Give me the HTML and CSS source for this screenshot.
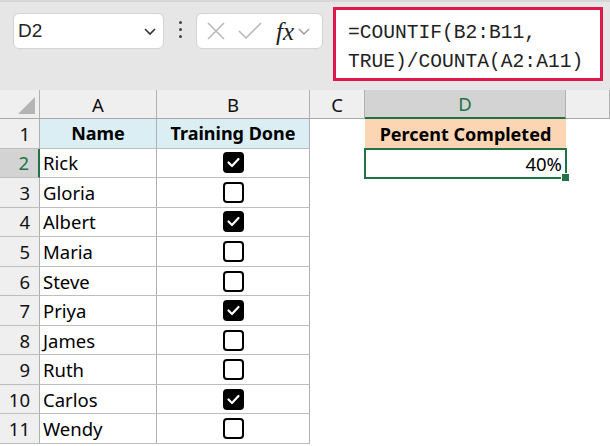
FILE: index.html
```html
<!DOCTYPE html>
<html lang="en">
<head>
    <meta charset="UTF-8">
    <title>Percent Completed</title>
    <link rel="stylesheet" href="styles.css">
</head>
<body>
    <div class="toolbar">
        <div class="namebox">
            <span>D2</span>
            <svg width="14" height="10" viewBox="0 0 14 10"><path d="M2 3 L7 8 L12 3" fill="none" stroke="#333" stroke-width="1.6"/></svg>
        </div>
        <div class="dots"><i></i><i></i><i></i></div>
        <div class="fxbox">
            <svg width="20" height="18" viewBox="0 0 20 18"><path d="M2 1 L18 17 M18 1 L2 17" stroke="#b5b5b5" stroke-width="1.5"/></svg>
            <svg width="24" height="18" viewBox="0 0 24 18"><path d="M1 9 L8 16 L23 1" fill="none" stroke="#b5b5b5" stroke-width="1.5"/></svg>
            <span class="fx">fx</span>
            <svg width="14" height="10" viewBox="0 0 14 10"><path d="M2 3 L7 8 L12 3" fill="none" stroke="#999" stroke-width="1.4"/></svg>
        </div>
        <div class="formula">=COUNTIF(B2:B11,<br>TRUE)/COUNTA(A2:A11)</div>
    </div>

    <div class="sheet">
        <div class="hd corner"><span class="tri"></span></div>
        <div class="hd">A</div>
        <div class="hd">B</div>
        <div class="hd">C</div>
        <div class="hd sel-col">D</div>
        <div class="hd"></div>

        <div class="rh">1</div>
        <div class="cell title">Name</div>
        <div class="cell title">Training Done</div>
        <div class="blank"></div>
        <div class="blank title peach">Percent Completed</div>
        <div class="blank"></div>

        <div class="rh sel-row">2</div>
        <div class="cell">Rick</div>
        <div class="cell mid"><span class="box on"></span></div>
        <div class="blank"></div>
        <div class="blank num active">40%<span class="handle"></span></div>
        <div class="blank"></div>

        <div class="rh">3</div>
        <div class="cell">Gloria</div>
        <div class="cell mid"><span class="box"></span></div>
        <div class="blank"></div><div class="blank"></div><div class="blank"></div>

        <div class="rh">4</div>
        <div class="cell">Albert</div>
        <div class="cell mid"><span class="box on"></span></div>
        <div class="blank"></div><div class="blank"></div><div class="blank"></div>

        <div class="rh">5</div>
        <div class="cell">Maria</div>
        <div class="cell mid"><span class="box"></span></div>
        <div class="blank"></div><div class="blank"></div><div class="blank"></div>

        <div class="rh">6</div>
        <div class="cell">Steve</div>
        <div class="cell mid"><span class="box"></span></div>
        <div class="blank"></div><div class="blank"></div><div class="blank"></div>

        <div class="rh">7</div>
        <div class="cell">Priya</div>
        <div class="cell mid"><span class="box on"></span></div>
        <div class="blank"></div><div class="blank"></div><div class="blank"></div>

        <div class="rh">8</div>
        <div class="cell">James</div>
        <div class="cell mid"><span class="box"></span></div>
        <div class="blank"></div><div class="blank"></div><div class="blank"></div>

        <div class="rh">9</div>
        <div class="cell">Ruth</div>
        <div class="cell mid"><span class="box"></span></div>
        <div class="blank"></div><div class="blank"></div><div class="blank"></div>

        <div class="rh">10</div>
        <div class="cell">Carlos</div>
        <div class="cell mid"><span class="box on"></span></div>
        <div class="blank"></div><div class="blank"></div><div class="blank"></div>

        <div class="rh">11</div>
        <div class="cell">Wendy</div>
        <div class="cell mid"><span class="box"></span></div>
        <div class="blank"></div><div class="blank"></div><div class="blank"></div>
    </div>
</body>
</html>
```

FILE: styles.css
```css
body {
    margin: 0;
    padding: 0;
    width: 610px;
    height: 446px;
    overflow: hidden;
    background: #fff;
    font-family: "Noto Sans", Arial, sans-serif;
    color: #000;
}
.toolbar {
    height: 90px;
    box-sizing: border-box;
    background: #e6e6e6;
    border-top: 2px solid #d6d6d6;
    display: flex;
    align-items: flex-start;
    padding: 5px 0 0 13px;
}
.namebox, .fxbox {
    height: 36px;
    margin-top: 6px;
    box-sizing: border-box;
    background: #fff;
    border: 1px solid #d3d3d3;
    border-radius: 6px;
    display: flex;
    align-items: center;
}
.namebox {
    width: 151px;
    justify-content: space-between;
    padding: 0 6px 0 4px;
    font-family: "Liberation Sans", Arial, sans-serif;
    font-size: 19px;
    color: #222;
}
.dots {
    width: 32px;
    margin-top: 14px;
    display: flex;
    flex-direction: column;
    align-items: center;
    gap: 4px;
}
.dots i {
    width: 3px;
    height: 3px;
    background: #444;
    border-radius: 50%;
}
.fxbox {
    width: 127px;
    padding: 0 4px 0 9px;
    gap: 12px;
}
.fx {
    font-family: "Liberation Serif", serif;
    font-style: italic;
    font-size: 25px;
    line-height: 1;
    color: #222;
    margin-left: 2px;
    margin-right: -9px;
}
.formula {
    margin-left: 10px;
    width: 270px;
    height: 74px;
    box-sizing: border-box;
    border: 3px solid #e0174a;
    background: #fff;
    padding: 9px 0 0 12px;
    font-family: "Liberation Mono", monospace;
    font-size: 19.6px;
    line-height: 29px;
    color: #222;
}
.sheet {
    display: grid;
    grid-template-columns: 40px 117px 153px 55px 201px 44px;
    grid-template-rows: 29px repeat(11, 29.55px);
}
.hd, .rh, .cell, .blank {
    box-sizing: border-box;
    display: flex;
    align-items: center;
    font-size: 18.5px;
    position: relative;
    white-space: nowrap;
}
.hd, .rh, .cell {
    border-right: 1px solid #b0b0b0;
    border-bottom: 1px solid #bebebe;
}
.hd {
    background: #efefef;
    justify-content: center;
    color: #111;
    border-bottom-color: #a8a8a8;
}
.corner {
    justify-content: flex-end;
    align-items: flex-end;
    padding: 0 4px 4px 0;
}
.tri {
    width: 0;
    height: 0;
    border-left: 17px solid transparent;
    border-bottom: 17px solid #b4b4b4;
}
.sel-col {
    background: #d3d3d3;
    color: #217346;
    border-bottom: 2px solid #217346;
}
.rh {
    background: #efefef;
    justify-content: flex-end;
    padding-right: 9px;
    color: #111;
}
.sel-row {
    background: #d3d3d3;
    color: #217346;
    border-right: 2px solid #217346;
}
.cell {
    padding-left: 3px;
}
.title {
    background: #daeef3;
    font-weight: bold;
    justify-content: center;
    padding-left: 0;
    font-size: 18px;
}
.peach {
    background: #fcd5b4;
}
.mid {
    justify-content: center;
    padding-left: 0;
}
.num {
    justify-content: flex-end;
    padding-right: 4px;
}
.active {
    outline: 2px solid #217346;
    outline-offset: -1px;
}
.handle {
    position: absolute;
    right: -4px;
    bottom: -4px;
    width: 7px;
    height: 7px;
    background: #217346;
    border: 1px solid #fff;
}
.box {
    width: 21px;
    height: 21px;
    box-sizing: border-box;
    border: 2px solid #000;
    border-radius: 4px;
    background: #fff;
}
.box.on {
    background: #000 url("data:image/svg+xml;utf8,<svg xmlns='http://www.w3.org/2000/svg' width='17' height='17' viewBox='0 0 17 17'><path d='M3.5 8.5 L7 12 L13.5 5' fill='none' stroke='white' stroke-width='2.2' stroke-linecap='round' stroke-linejoin='round'/></svg>") center no-repeat;
}
```
